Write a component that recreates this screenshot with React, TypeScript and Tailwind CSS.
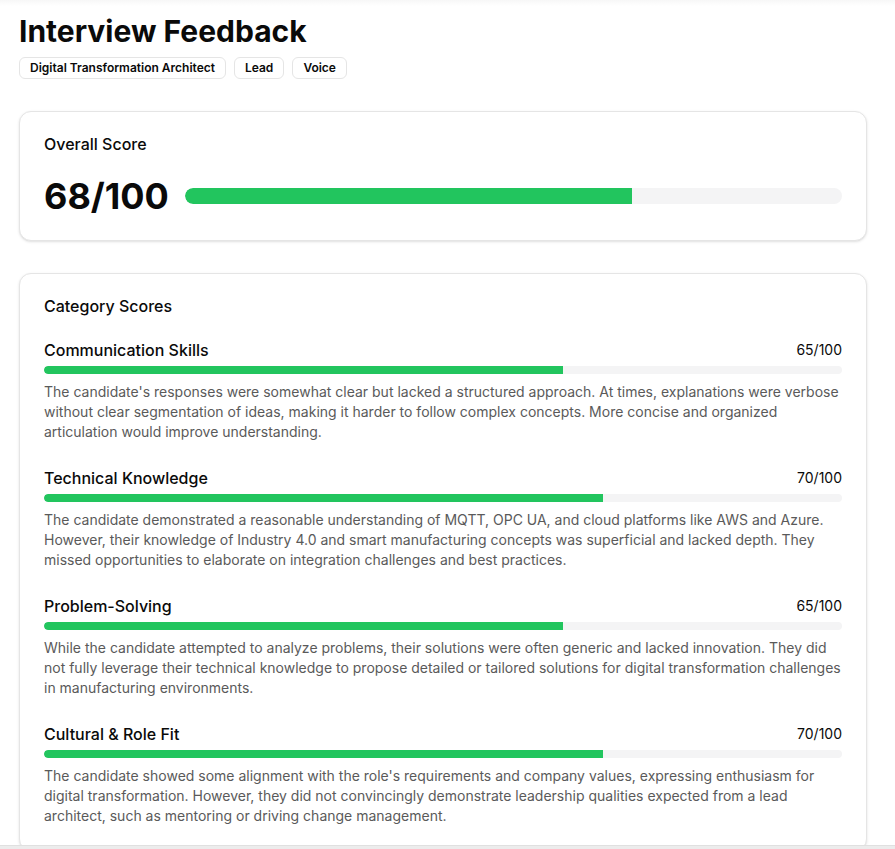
import React from "react";

const categories = [
  {
    name: "Communication Skills",
    score: 65,
    text: "The candidate's responses were somewhat clear but lacked a structured approach. At times, explanations were verbose without clear segmentation of ideas, making it harder to follow complex concepts. More concise and organized articulation would improve understanding.",
  },
  {
    name: "Technical Knowledge",
    score: 70,
    text: "The candidate demonstrated a reasonable understanding of MQTT, OPC UA, and cloud platforms like AWS and Azure. However, their knowledge of Industry 4.0 and smart manufacturing concepts was superficial and lacked depth. They missed opportunities to elaborate on integration challenges and best practices.",
  },
  {
    name: "Problem-Solving",
    score: 65,
    text: "While the candidate attempted to analyze problems, their solutions were often generic and lacked innovation. They did not fully leverage their technical knowledge to propose detailed or tailored solutions for digital transformation challenges in manufacturing environments.",
  },
  {
    name: "Cultural & Role Fit",
    score: 70,
    text: "The candidate showed some alignment with the role's requirements and company values, expressing enthusiasm for digital transformation. However, they did not convincingly demonstrate leadership qualities expected from a lead architect, such as mentoring or driving change management.",
  },
];

function Bar({ value, h }: { value: number; h: string }) {
  return (
    <div className={`w-full ${h} rounded-full bg-[#f4f4f5] overflow-hidden`}>
      <div className="h-full bg-[#22c55e] rounded-l-full" style={{ width: `${value}%` }} />
    </div>
  );
}

export default function App() {
  return (
    <div
      className="w-[895px] h-[849px] flex flex-col bg-white text-[#0a0a0a]"
      style={{ fontFamily: "Inter, 'Noto Sans', sans-serif" }}
    >
      <div className="h-[845px] overflow-hidden bg-[linear-gradient(to_bottom,#f7f7f7,#ffffff_6px)] pl-[19px] pr-[28px] pt-[13px]">
        <h1 className="text-3xl font-bold leading-9 mb-2">Interview Feedback</h1>
        <div className="flex gap-2 mb-8">
          {["Digital Transformation Architect", "Lead", "Voice"].map((b) => (
            <span
              key={b}
              className="inline-flex items-center rounded-md border border-[#e5e5e5] px-2.5 py-0.5 text-xs font-semibold leading-4"
            >
              {b}
            </span>
          ))}
        </div>

        <div className="rounded-xl border border-[#e5e5e5] bg-white shadow-sm mb-8">
          <div className="p-6">
            <h2 className="text-base font-medium leading-none">Overall Score</h2>
          </div>
          <div className="px-6 pb-6 flex items-center gap-4">
            <span className="text-4xl font-bold leading-10 shrink-0">68/100</span>
            <Bar value={68} h="h-4" />
          </div>
        </div>

        <div className="rounded-xl border border-[#e5e5e5] bg-white shadow-sm">
          <div className="p-6">
            <h2 className="text-base font-medium leading-none">Category Scores</h2>
          </div>
          <div className="px-6 pb-6 flex flex-col gap-6">
            {categories.map((c) => (
              <div key={c.name}>
                <div className="flex justify-between items-center mb-1">
                  <span className="text-base font-medium leading-6">{c.name}</span>
                  <span className="text-sm leading-5">{c.score}/100</span>
                </div>
                <Bar value={c.score} h="h-2" />
                <p className="mt-2 text-sm leading-5 text-[#5a5a5a]">{c.text}</p>
              </div>
            ))}
          </div>
        </div>
      </div>
      <div className="h-[4px] bg-[#ececec] border-t border-[#e0e0e0]" />
    </div>
  );
}
